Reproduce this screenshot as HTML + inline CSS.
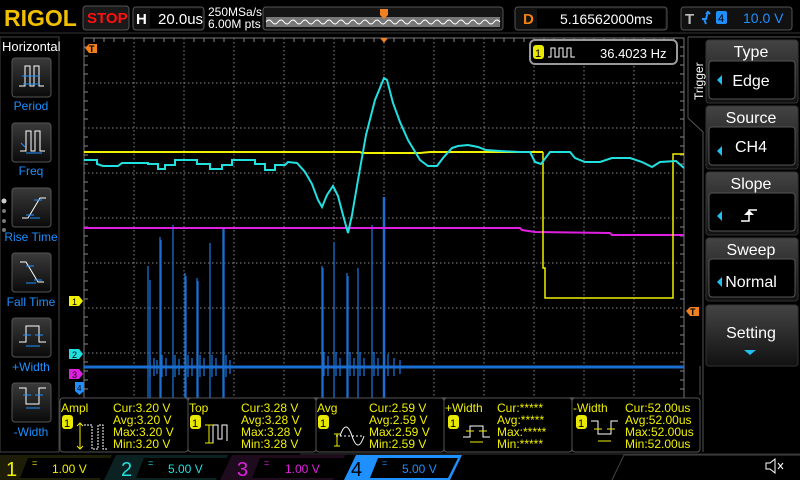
<!DOCTYPE html>
<html><head><meta charset="utf-8"><style>
body{margin:0;background:#000;width:800px;height:480px;overflow:hidden}
svg{display:block}
text{font-family:"Liberation Sans",sans-serif}
</style></head><body>
<svg width="800" height="480" viewBox="0 0 800 480" xmlns="http://www.w3.org/2000/svg">
<defs>
<linearGradient id="btn" x1="0" y1="0" x2="0" y2="1"><stop offset="0" stop-color="#3a3a3a"/><stop offset="1" stop-color="#0a0a0a"/></linearGradient>
<linearGradient id="mb" x1="0" y1="0" x2="0" y2="1"><stop offset="0" stop-color="#444"/><stop offset="1" stop-color="#111"/></linearGradient>
</defs>
<rect width="800" height="480" fill="#000"/>
<!-- top bar -->
<text x="4" y="26" font-family="Liberation Serif" font-weight="bold" font-size="23" fill="#f0c000">RIGOL</text>
<rect x="83" y="6" width="46" height="24" rx="3" fill="#1a1a1a" stroke="#555"/>
<text x="87" y="23" font-size="15" font-weight="bold" fill="#ff1010">STOP</text>
<rect x="133" y="7" width="71" height="23" rx="3" fill="#111" stroke="#555"/>
<rect x="150" y="9" width="52" height="19" fill="#000"/>
<text x="136" y="24" font-size="15" font-weight="bold" fill="#fff">H</text>
<text x="158" y="24" font-size="15" fill="#fff">20.0us</text>
<text x="208" y="16" font-size="12" fill="#fff">250MSa/s</text>
<text x="208" y="28" font-size="12" fill="#fff">6.00M pts</text>
<rect x="263" y="7" width="240" height="23" rx="3" fill="#151515" stroke="#555"/>
<rect x="266" y="17" width="234" height="10" fill="#777"/>
<path d="M266 22 q3-4 6 0 t6 0 t6 0 t6 0 t6 0 t6 0 t6 0 t6 0 t6 0 t6 0 t6 0 t6 0 t6 0 t6 0 t6 0 t6 0 t6 0 t6 0 t6 0 t6 0 t6 0 t6 0 t6 0 t6 0 t6 0 t6 0 t6 0 t6 0 t6 0 t6 0 t6 0 t6 0 t6 0 t6 0 t6 0 t6 0 t6 0 t6 0 t6 0" stroke="#fff" fill="none" stroke-width="1"/>
<path d="M380 9 h8 v6 l-4 4 l-4 -4z" fill="#f08020"/>
<rect x="515" y="7" width="152" height="23" rx="3" fill="#111" stroke="#555"/>
<rect x="537" y="9" width="128" height="19" fill="#000"/>
<text x="523" y="24" font-size="15" font-weight="bold" fill="#f08010">D</text>
<text x="560" y="24" font-size="14" fill="#fff">5.16562000ms</text>
<rect x="681" y="7" width="111" height="23" rx="3" fill="#111" stroke="#555"/>
<text x="685" y="24" font-size="15" font-weight="bold" fill="#bbb">T</text>
<path d="M702 19 h4 l2-8 M704 19 l2 5 M706 14 l2-2 l2 2" stroke="#1e90ff" stroke-width="2" fill="none"/>
<rect x="716" y="11" width="11" height="13" rx="2" fill="#1e90ff"/>
<text x="718" y="22" font-size="11" fill="#000">4</text>
<text x="743" y="23" font-size="14" fill="#1e90ff">10.0 V</text>
<line x1="0" y1="33" x2="800" y2="33" stroke="#333"/>
<!-- left panel -->
<rect x="0" y="37" width="59" height="415" fill="#000" stroke="#444"/>
<text x="2" y="51" font-size="13" fill="#fff">Horizontal</text>
<g font-size="12" fill="#1e90ff" text-anchor="middle">
<rect x="12" y="58" width="39" height="39" rx="3" fill="url(#btn)" stroke="#555"/>
<path d="M19 86 h6 v-20 h5 v20 h4 v-20 h5 v20 h5" stroke="#fff" fill="none"/><path d="M22 76h18M23 84h16" stroke="#1e90ff"/>
<text x="31" y="110">Period</text>
<rect x="12" y="123" width="39" height="39" rx="3" fill="url(#btn)" stroke="#555"/>
<path d="M20 151 h6 v-20 h5 v20 h4 v-20 h5 v20 h5" stroke="#fff" fill="none"/><path d="M26 153h16M21 143l4 4" stroke="#1e90ff"/>
<text x="31" y="175">Freq</text>
<rect x="12" y="188" width="39" height="39" rx="3" fill="url(#btn)" stroke="#555"/>
<path d="M22 218 h6 l12 -20 h6" stroke="#fff" fill="none"/><path d="M26 215h8M34 200h8M30 218h10" stroke="#1e90ff"/>
<text x="31" y="241">Rise Time</text>
<rect x="12" y="253" width="39" height="39" rx="3" fill="url(#btn)" stroke="#555"/>
<path d="M20 262 h6 l12 20 h6" stroke="#fff" fill="none"/><path d="M26 266h8M34 280h8M26 283h10" stroke="#1e90ff"/>
<text x="31" y="306">Fall Time</text>
<rect x="12" y="318" width="39" height="39" rx="3" fill="url(#btn)" stroke="#555"/>
<path d="M19 342 h7 v-16 h13 v16 h7" stroke="#fff" fill="none"/><path d="M23 335h8M35 335h8M26 346h14" stroke="#1e90ff"/>
<text x="31" y="371">+Width</text>
<rect x="12" y="383" width="39" height="39" rx="3" fill="url(#btn)" stroke="#555"/>
<path d="M19 388 h7 v16 h13 v-16 h7" stroke="#fff" fill="none"/><path d="M23 395h8M35 395h8M26 408h14" stroke="#1e90ff"/>
<text x="31" y="436">-Width</text>
</g>
<circle cx="4" cy="201" r="2.5" fill="#ccc"/><circle cx="4" cy="211" r="2" fill="#777"/><circle cx="4" cy="221" r="2" fill="#777"/><circle cx="4" cy="230" r="2" fill="#777"/>
<!-- grid -->
<g stroke="#888" stroke-dasharray="1.5,2.5" stroke-width="1">
<path d="M134 38V398M184 38V398M234 38V398M284 38V398M334 38V398M434 38V398M484 38V398M534 38V398M584 38V398M634 38V398"/>
<path d="M84 83H684M84 128H684M84 173H684M84 263H684M84 308H684M84 353H684"/>
</g>
<path d="M384 38V398M84 218H684" stroke="#888" stroke-dasharray="1.5,2.5"/>
<rect x="84" y="38" width="600" height="360" fill="none" stroke="#777"/>
<g stroke="#888">
<path d="M94 38v4M104 38v4M114 38v4M124 38v4M144 38v4M154 38v4M164 38v4M174 38v4M194 38v4M204 38v4M214 38v4M224 38v4M244 38v4M254 38v4M264 38v4M274 38v4M294 38v4M304 38v4M314 38v4M324 38v4M344 38v4M354 38v4M364 38v4M374 38v4M394 38v4M404 38v4M414 38v4M424 38v4M444 38v4M454 38v4M464 38v4M474 38v4M494 38v4M504 38v4M514 38v4M524 38v4M544 38v4M554 38v4M564 38v4M574 38v4M594 38v4M604 38v4M614 38v4M624 38v4M644 38v4M654 38v4M664 38v4M674 38v4"/>
<path d="M84 47h4M84 56h4M84 65h4M84 74h4M84 92h4M84 101h4M84 110h4M84 119h4M84 137h4M84 146h4M84 155h4M84 164h4M84 182h4M84 191h4M84 200h4M84 209h4M84 227h4M84 236h4M84 245h4M84 254h4M84 272h4M84 281h4M84 290h4M84 299h4M84 317h4M84 326h4M84 335h4M84 344h4M84 362h4M84 371h4M84 380h4M84 389h4"/>
<path d="M680 47h4M680 56h4M680 65h4M680 74h4M680 92h4M680 101h4M680 110h4M680 119h4M680 137h4M680 146h4M680 155h4M680 164h4M680 182h4M680 191h4M680 200h4M680 209h4M680 227h4M680 236h4M680 245h4M680 254h4M680 272h4M680 281h4M680 290h4M680 299h4M680 317h4M680 326h4M680 335h4M680 344h4M680 362h4M680 371h4M680 380h4M680 389h4"/>
</g>
<path d="M380 38 h8 l-4 5z" fill="#f08020"/>
<path d="M85 48 l4 -4 h8 v9 h-8z" fill="#f08020"/><text x="89" y="52" font-size="9" font-weight="bold" fill="#000">T</text>
<!-- waveforms -->
<path d="M84 367 H684" stroke="#1a6fd0" stroke-width="3"/>
<g stroke="#1a6fd0" stroke-width="1.3" fill="none">
<path d="M148 398V266M150 398V280M160 398V237M161 398V240M173 398V225M185 398V273M186 398V276M197 398V278M198 398V281M210 398V243M223 398V227M224 398V227M322 398V266M323 398V268M334 398V242M347 398V273M348 398V276M358 398V268M372 398V225"/>
<path d="M384 398V197" stroke-width="2.5"/>
<path d="M150 355v22M154 358v18M157 360v14M162 355v22M166 358v18M175 355v22M179 359v16M188 355v22M192 358v18M200 355v22M204 358v18M212 355v22M216 358v18M226 355v22M230 360v14M324 352v24M328 356v20M336 352v24M340 358v18M350 352v24M354 358v18M360 352v24M364 358v18M374 352v24M378 358v18M388 354v22M394 358v18M400 360v14"/>
</g>
<polyline fill="none" stroke="#e020e0" stroke-width="2" points="84,228 520,228 522,230 535,232 610,233 612,235 684,235"/>
<polyline fill="none" stroke="#f0f000" stroke-width="2" points="84,152 360,152 362,153 420,153 430,152 543,152"/>
<polyline fill="none" stroke="#f0f000" stroke-width="1.5" points="543,152 543,268 545,268 545,298 673,298 673,154 684,154"/>
<polyline fill="none" stroke="#20e0e0" stroke-width="2" points="84,160 97,160 97,164 103,166 118,166 122,163 148,163 148,164 158,164 158,169 165,169 165,165 175,165 175,160 197,160 197,164 210,164 210,169 222,169 222,165 232,165 232,160 255,160 255,164 265,164 265,170 275,170 275,165 285,165 288,162 297,163 305,172 312,184 318,200 322,207 327,195 333,186 338,196 343,215 348,233 352,215 358,180 366,135 375,100 384,78 387,80 393,103 400,122 408,140 414,150 420,160 428,166 437,166 443,158 452,148 458,146 468,145 478,147 486,150 500,151 520,152 530,152 535,162 541,164 550,152 570,152 575,158 585,162 600,162 612,158 630,158 642,162 652,167 660,162 676,161 684,168"/>
<!-- channel markers -->
<path d="M69 296 h10 l4 5 l-4 5 h-10z" fill="#f0f000"/><text x="72" y="305" font-size="9" fill="#000">1</text>
<path d="M69 349 h10 l4 5 l-4 5 h-10z" fill="#20e0e0"/><text x="72" y="358" font-size="9" fill="#000">2</text>
<path d="M69 369 h10 l4 5 l-4 5 h-10z" fill="#e020e0"/><text x="72" y="378" font-size="9" fill="#000">3</text>
<path d="M75 382 h9 v9 l-4.5 4 l-4.5 -4z" fill="#1e90ff"/><text x="77" y="391" font-size="8" fill="#000">4</text>
<path d="M686 311 l4 -4 h9 v9 h-9z" fill="#f08020"/><text x="690" y="315" font-size="9" font-weight="bold" fill="#000">T</text>
<!-- freq box -->
<rect x="530" y="40" width="147" height="24" rx="5" fill="#000" stroke="#999" stroke-width="2"/>
<rect x="533" y="45" width="11" height="14" rx="3" fill="#e8e800"/><text x="535" y="57" font-size="11" fill="#000">1</text>
<path d="M548 57 h3 v-9 h4 v9 h4 v-9 h4 v9 h4 v-9 h4 v9 h4" stroke="#fff" fill="none"/>
<text x="600" y="58" font-size="13" fill="#fff">36.4023 Hz</text>
<!-- right menu -->
<path d="M688 37 H800 M688 37 V118 L703 132 V452" stroke="#555" fill="none"/>
<text transform="translate(703,100) rotate(-90)" font-size="12" fill="#fff">Trigger</text>
<g font-size="16" fill="#fff" text-anchor="middle">
<rect x="706" y="40" width="92" height="63" rx="3" fill="url(#mb)" stroke="#333"/>
<text x="751" y="57">Type</text>
<rect x="709" y="61" width="86" height="38" rx="3" fill="#000" stroke="#555"/>
<path d="M717 80 l5 -5 v10z" fill="#20c0f0"/><text x="751" y="86">Edge</text>
<rect x="706" y="106" width="92" height="63" rx="3" fill="url(#mb)" stroke="#333"/>
<text x="751" y="123">Source</text>
<rect x="709" y="127" width="86" height="38" rx="3" fill="#000" stroke="#555"/>
<path d="M717 151 l5 -5 v10z" fill="#20c0f0"/><text x="751" y="152">CH4</text>
<rect x="706" y="172" width="92" height="63" rx="3" fill="url(#mb)" stroke="#333"/>
<text x="751" y="189">Slope</text>
<rect x="709" y="193" width="86" height="38" rx="3" fill="#000" stroke="#555"/>
<path d="M717 216 l5 -5 v10z" fill="#20c0f0"/>
<path d="M741 221 h8 v-11 h8" stroke="#fff" fill="none" stroke-width="1.5"/><path d="M744 215 l5 -5 l5 5z" fill="#fff"/>
<rect x="706" y="238" width="92" height="63" rx="3" fill="url(#mb)" stroke="#333"/>
<text x="751" y="255">Sweep</text>
<rect x="709" y="259" width="86" height="38" rx="3" fill="#000" stroke="#555"/>
<path d="M717 282 l5 -5 v10z" fill="#20c0f0"/><text x="751" y="287">Normal</text>
<rect x="706" y="305" width="92" height="61" rx="3" fill="url(#mb)" stroke="#333"/>
<text x="751" y="338">Setting</text>
<path d="M744 350 h12 l-6 5z" fill="#20c0f0"/>
</g>
<path d="M700 366 V395" stroke="#555"/>
<!-- measurement boxes -->
<g font-size="12" fill="#f0f000">
<rect x="60" y="398" width="128" height="54" rx="3" fill="#000" stroke="#555"/>
<text x="61" y="412">Ampl</text>
<rect x="62" y="415" width="11" height="14" rx="3" fill="#e8e800"/><text x="64" y="427" font-size="11" fill="#000">1</text>
<path d="M84 425 h8 v24 h6 v-24 h5 v24 h4" stroke="#fff" fill="none" stroke-dasharray="2,1"/><path d="M80 423 v26 M77 426 l3 -3 l3 3 M77 446 l3 3 l3 -3" stroke="#f0f000" fill="none"/>
<text x="113" y="412">Cur:3.20 V</text><text x="113" y="424">Avg:3.20 V</text><text x="113" y="436">Max:3.20 V</text><text x="113" y="448">Min:3.20 V</text>
<rect x="188" y="398" width="128" height="54" rx="3" fill="#000" stroke="#555"/>
<text x="189" y="412">Top</text>
<rect x="190" y="415" width="11" height="14" rx="3" fill="#e8e800"/><text x="192" y="427" font-size="11" fill="#000">1</text>
<path d="M210 443 h3 v-18 h5 v14 h4 v-14 h5 v16" stroke="#fff" fill="none"/><path d="M209 425 v18 M205 425h8M205 443h8" stroke="#f0f000" fill="none"/>
<text x="241" y="412">Cur:3.28 V</text><text x="241" y="424">Avg:3.28 V</text><text x="241" y="436">Max:3.28 V</text><text x="241" y="448">Min:3.28 V</text>
<rect x="316" y="398" width="128" height="54" rx="3" fill="#000" stroke="#555"/>
<text x="317" y="412">Avg</text>
<rect x="318" y="415" width="11" height="14" rx="3" fill="#e8e800"/><text x="320" y="427" font-size="11" fill="#000">1</text>
<path d="M340 436 q6 -18 12 0 t12 0" stroke="#fff" fill="none"/><path d="M336 436 h28" stroke="#fff" stroke-dasharray="2,2"/><path d="M337 434 v12 M334 434h6M334 446h6" stroke="#f0f000"/>
<text x="369" y="412">Cur:2.59 V</text><text x="369" y="424">Avg:2.59 V</text><text x="369" y="436">Max:2.59 V</text><text x="369" y="448">Min:2.59 V</text>
<rect x="444" y="398" width="128" height="54" rx="3" fill="#000" stroke="#555"/>
<text x="445" y="412">+Width</text>
<rect x="448" y="415" width="11" height="14" rx="3" fill="#e8e800"/><text x="450" y="427" font-size="11" fill="#000">1</text>
<path d="M463 437 h7 v-11 h13 v11 h7" stroke="#fff" fill="none"/><path d="M466 431h8M479 431h8M470 442h13" stroke="#f0f000"/>
<text x="497" y="412">Cur:*****</text><text x="497" y="424">Avg:*****</text><text x="497" y="436">Max:*****</text><text x="497" y="448">Min:*****</text>
<rect x="572" y="398" width="128" height="54" rx="3" fill="#000" stroke="#555"/>
<text x="573" y="412">-Width</text>
<rect x="576" y="415" width="11" height="14" rx="3" fill="#e8e800"/><text x="578" y="427" font-size="11" fill="#000">1</text>
<path d="M591 421 h7 v13 h13 v-13 h7" stroke="#fff" fill="none"/><path d="M594 429h8M607 429h8M598 441h13" stroke="#f0f000"/>
<text x="625" y="412">Cur:52.00us</text><text x="625" y="424">Avg:52.00us</text><text x="625" y="436">Max:52.00us</text><text x="625" y="448">Min:52.00us</text>
</g>
<!-- bottom bar -->
<path d="M0 455 H112 L100 480 H0z" fill="#1e1e08"/>
<path d="M28 458 H112 L101 478 H20z" fill="#000"/>
<text x="6" y="476" font-size="20" fill="#f0f000">1</text>
<text x="32" y="466" font-size="9" fill="#f0f000">=</text><text x="52" y="473" font-size="12" fill="#f0f000">1.00 V</text>
<path d="M116 455 H228 L216 480 H104z" fill="#0c2222"/>
<path d="M144 458 H228 L217 478 H136z" fill="#000"/>
<text x="121" y="476" font-size="20" fill="#20e0e0">2</text>
<text x="148" y="466" font-size="9" fill="#20e0e0">=</text><text x="168" y="473" font-size="12" fill="#20e0e0">5.00 V</text>
<path d="M232 455 H345 L333 480 H220z" fill="#1e0c1e"/>
<path d="M260 458 H345 L334 478 H252z" fill="#000"/>
<text x="237" y="476" font-size="20" fill="#e020e0">3</text>
<text x="264" y="466" font-size="9" fill="#e020e0">=</text><text x="285" y="473" font-size="12" fill="#e020e0">1.00 V</text>
<path d="M356 455 H462 L450 480 H344z" fill="#1e90ff"/>
<path d="M378 458 H458 L448 478 H370z" fill="#000"/>
<text x="351" y="476" font-size="20" fill="#000">4</text>
<text x="382" y="466" font-size="9" fill="#1e90ff">=</text><text x="402" y="473" font-size="12" fill="#1e90ff">5.00 V</text>
<path d="M300 454 H800" stroke="#333"/>
<path d="M612 480 l12 -25 H800" stroke="#444" fill="none"/>
<path d="M766 463 h4 l5 -4 v14 l-5 -4 h-4z" stroke="#fff" fill="none"/><path d="M778 463 l5 6 M783 463 l-5 6" stroke="#fff"/>
</svg>
</body></html>
